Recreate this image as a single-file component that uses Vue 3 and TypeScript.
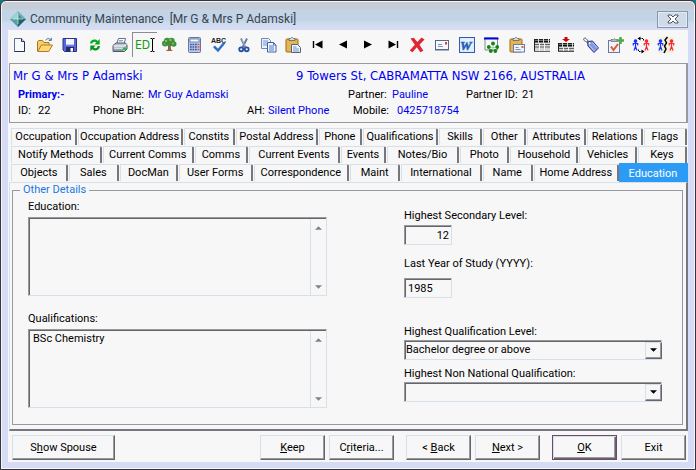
<script setup lang="ts">
import { ref } from 'vue'

interface Tool { name: string; art: string; active?: boolean }
interface Tab { label: string; span: number }
interface Action { before: string; key: string; after: string }

const person = (x: number, c: string) =>
  `<g transform="translate(${x} 0)" stroke="${c}" fill="none" stroke-width="1.200"><circle cx="2.500" cy="4" r="1.200" fill="${c}"/><path d="M2.500 5v5M.3 8.500v-2h4.400v2M2.500 9.500l-1.500 4M2.500 9.500l1.500 4"/></g>`
const board = `<rect x="1" y="2" width="12" height="13" rx="1" fill="#e8b44c" stroke="#9a6a1c"/><path d="M4 3.500h6V1.500H8.500L7.500 .5h-1l-1 1H4z" fill="#d8dce4" stroke="#59606e" stroke-width=".8"/>`
const sheet = (y: number) =>
  `<rect x="0" y="${y}" width="16" height="${15 - y}" fill="#d3d6d3"/><path d="M0 ${y + .5}h16" stroke="#222" stroke-dasharray="4 1"/><path d="M0 ${y + 2.5}h16" stroke="#111" stroke-width="2" stroke-dasharray="4 1"/><path d="M0 ${y + 5.500}h16M0 ${y + 8}h16M0 14.500h16" stroke="#444" stroke-width=".8"/><path d="M5.500 ${y + 4}v${10 - y}M10.500 ${y + 4}v${10 - y}" stroke="#f4f4f4"/><path d="M.5 ${y}v${14 - y}" stroke="#222"/>`

const tools: Tool[] = [
  { name: 'New', art: '<path d="M2.500 1.500h7l3 3v10h-10z" fill="#f6faff" stroke="#5c6f93"/><path d="M9.500 1.500v3h3" fill="#cbd9ee" stroke="#26344f"/><path d="M12.500 5v9.500h-10" fill="none" stroke="#26344f"/>' },
  { name: 'Open', art: '<path d="M.5 14V4.500l1-1h4l1.500 2h5v3" fill="#f2cf69" stroke="#ab7724"/><path d="M.7 14.500l3.800-6.500h11l-3.800 6.500z" fill="#ffd878" stroke="#b47b22"/><path d="M8.500 3.200c2-2.200 4-1.900 5.400-.2M14.300.8v2.600h-2.600" fill="none" stroke="#49678f"/>' },
  { name: 'Save', art: '<path d="M1 1.500h13.500v13H2.500L1 13z" fill="#5867d8" stroke="#27328f"/><rect x="4" y="2" width="8" height="6" fill="#f4f6ff"/><path d="M4 8h8" stroke="#8ca2e8"/><rect x="4" y="10" width="8" height="4.500" fill="#222a69"/><rect x="8.500" y="11" width="2.500" height="3.500" fill="#fff"/>' },
  { name: 'Refresh', art: '<path d="M3 6.500c.4-4 5.200-5.300 7.700-2.500l2-2v5.500H7.500L9.300 5.500C7.500 4 5.800 4.800 5.300 6.500z" fill="#08a820"/><path d="M13 9c-.4 4.500-5 5.800-7.700 3.200l-2 2V8.500h5.200l-1.800 2c1.800 1.500 3.400.6 4-1.500z" fill="#08951c"/>' },
  { name: 'Print', art: '<path d="M4.500 7l2-5.500h7L12 7z" fill="#fff" stroke="#61708b"/><path d="M1 8.500l3-2.500h9.500l1.500 2v4L12.500 14.500H1z" fill="#b9c1cc" stroke="#4b586c"/><path d="M1.500 9h10.500l2.500-1.500M2.500 12h8" stroke="#f8fbff" fill="none"/><path d="M2 13h9" stroke="#58677e"/><rect x="11" y="10.500" width="3" height="2.500" fill="#19c92e"/><path d="M7 3.500h4M6.500 5h4" stroke="#95a4bd"/>' },
  { name: 'Edit', active: true, art: '' },
  { name: 'Family tree', art: '<path d="M7 7h2.500l.5 5.500 2 1.500H4.500L7 12.500z" fill="#976239"/><path d="M8 8L5 6.500M9 9l3-2.500" stroke="#79502c"/><g fill="#438d3d"><circle cx="4" cy="6.500" r="3"/><circle cx="6" cy="3.800" r="3"/><circle cx="10.500" cy="4" r="3.200"/><circle cx="12.700" cy="7" r="2.800"/><circle cx="8.500" cy="7" r="2.500"/></g><g fill="#86c66b"><circle cx="5" cy="4" r="1.200"/><circle cx="9.500" cy="3" r="1.200"/><circle cx="12" cy="6.500" r="1"/><circle cx="3.500" cy="7" r=".8"/></g>' },
  { name: 'Calculator', art: '<rect x="2.500" y=".5" width="12" height="15" rx="1" fill="#b9cbe8" stroke="#6376a4"/><rect x="4" y="2" width="9" height="3" fill="#f4faff" stroke="#486190" stroke-width=".7"/><path d="M4 7.500h1.700M6.500 7.500h1.700M9 7.500h1.700M4 10h1.700M6.500 10h1.700M9 10h1.700M4 12.500h1.700M6.500 12.500h1.700M9 12.500h1.700" stroke="#364f9d" stroke-width="1.400"/><path d="M11.500 7.500h2M11.500 10h2M11.500 12.500h2" stroke="#d65c56" stroke-width="1.400"/>' },
  { name: 'Spelling', art: '<text x="0" y="5.500" font-size="7" font-weight="700" font-family="Liberation Sans, sans-serif" fill="#222">ABC</text><path d="M3 9.500l4 4 6.500-8" fill="none" stroke="#397ad5" stroke-width="2.500"/><path d="M3 9.500l4 4 6.500-8" fill="none" stroke="#2358a9" stroke-width=".8"/>' },
  { name: 'Cut', art: '<path d="M5 1.500l4.500 9M11 1.500l-4.500 9" stroke="#5e7898" stroke-width="1.800"/><path d="M5.700 2l3.800 8" stroke="#c9d7e7" stroke-width=".7"/><g fill="#d9e7ff" stroke="#244da5" stroke-width="1.700"><circle cx="5.200" cy="12.300" r="2"/><circle cx="10.700" cy="12.300" r="2"/></g>' },
  { name: 'Copy', art: '<path d="M.5 1.500h7l2 2v8h-9z" fill="#e9f2ff" stroke="#7188b5"/><path d="M2 4h5M2 6h5M2 8h5" stroke="#7495cc"/><path d="M6.500 5.500h6l2.500 2.500v7H6.500z" fill="#f2f7ff" stroke="#3f62a5"/><path d="M12.500 5.500V8H15M8 9h5M8 11h5M8 13h5" stroke="#5079be" fill="none"/>' },
  { name: 'Paste', art: board + '<path d="M6.500 7.500h6l3 3v5h-9z" fill="#eef5ff" stroke="#4e6387"/><path d="M8 10h3.500M8 12h6M8 14h6" stroke="#7893bc"/>' },
  { name: 'First', art: '<path d="M3.500 4v7" stroke="#000" stroke-width="1.400"/><path d="M12.500 3.500v8L5 7.500z"/>' },
  { name: 'Previous', art: '<path d="M12 3.500v8L4 7.500z"/>' },
  { name: 'Next record', art: '<path d="M4 3.500v8l8-4z"/>' },
  { name: 'Last', art: '<path d="M12.500 4v7" stroke="#000" stroke-width="1.400"/><path d="M3.500 3.500v8L11 7.500z"/>' },
  { name: 'Delete', art: '<path d="M1.500 1.500l3.300-.8 3.500 4.200L12.500.5l3 2-5 5.200 3.900 6-3 1.600-3.600-5-4.300 5-2.800-1.700 5.200-5.900z" fill="#df2631"/>' },
  { name: 'Email', art: '<rect x="1.500" y="3.500" width="13" height="9" fill="#f5f9ff" stroke="#536986"/><path d="M4 7.500h4M4 9.500h5" stroke="#8091ad"/><rect x="11" y="5" width="2" height="2.500" fill="#dc3b33"/><path d="M1 13.500h14" stroke="#a6b3c6"/>' },
  { name: 'Word', art: '<rect x=".5" y=".5" width="15" height="15" fill="#dce9ff" stroke="#2c5fb3"/><path d="M2 2h12v12H2z" fill="#e6effc"/><text x="1" y="12.500" font-family="Liberation Serif, serif" font-size="13" font-style="italic" font-weight="700" fill="#235db6" stroke="#235db6" stroke-width=".5">W</text>' },
  { name: 'Relationships', art: '<path d="M1 1h12.500v12H1z" fill="#f8f8f8" stroke="#888"/><path d="M0 1.500h14.500" stroke="#0000df" stroke-width="2"/><path d="M9 7v7M5 10.500h8" stroke="#9cb89c" stroke-width=".7"/><g fill="#118514"><circle cx="9" cy="6.500" r="1.900"/><circle cx="4.800" cy="10" r="1.900"/><circle cx="13.200" cy="10" r="1.900"/><circle cx="6.800" cy="14" r="1.900"/><circle cx="11.300" cy="14" r="1.900"/></g>' },
  { name: 'Mail note', art: board + '<rect x="4.500" y="7.500" width="11" height="7.500" fill="#eef5ff" stroke="#6b7da7"/><path d="M6.500 10.500h3M6.500 12.500h5" stroke="#8291b4"/><rect x="12.500" y="9" width="2" height="2" fill="#df5c3f"/>' },
  { name: 'List', art: sheet(2) },
  { name: 'Insert', art: sheet(6) + '<path d="M6.500 0h3v2h2.500L8 5 4 2h2.500z" fill="#d50000"/>' },
  { name: 'Tag', art: '<path d="M4.500 4.500l5-.5 6 7-4.500 4.500-6-6.500z" fill="#8397dc" stroke="#26358c"/><path d="M6 8l5.500 6M9.500 5.500l5 5.700" stroke="#c3cef8"/><circle cx="6.500" cy="6.300" r="1" fill="#fff"/><path d="M6 6L2.500 4.500C-.5 3 .5 0 3 1.500L6 5" fill="none" stroke="#555b73"/>' },
  { name: 'Add task', art: '<rect x=".5" y="3.500" width="11" height="12" fill="#eef3ff" stroke="#6c7799"/><path d="M3 4.500h6v-2H7.500l-1-1-1 1H3z" fill="#b3bbc8" stroke="#606b80" stroke-width=".7"/><path d="M3 9.500l2.500 3.500L10 7" fill="none" stroke="#e4572a" stroke-width="2"/><path d="M12.500 0v7M9 3.500h7" stroke="#53a948" stroke-width="2.500"/>' },
  { name: 'Swap partners', art: person(0, '#1730ff') + person(11, '#ff2630') + '<path d="M6 1.500h4.500V4M10 14.500H5.500V12" stroke="#000" fill="none" stroke-dasharray="1.500 1"/><path d="M7.500 -.5v4L4.500 1.500zM8.500 12.500v4l3-2z"/>' },
  { name: 'Separate partners', art: '<rect width="16" height="16" fill="#f1f0dc"/>' + person(0, '#1730ff') + person(11, '#ff2630') + '<path d="M9.500 0L7 3l1.500 3L6.500 9l1.500 3-2 4" fill="none" stroke="#000" stroke-width="1.500"/>' },
]

const tabRows: Tab[][] = [
  [
    { label: 'Occupation', span: 67 }, { label: 'Occupation Address', span: 109 }, { label: 'Constits', span: 52 },
    { label: 'Postal Address', span: 84 }, { label: 'Phone', span: 43 }, { label: 'Qualifications', span: 77 },
    { label: 'Skills', span: 43 }, { label: 'Other', span: 43 }, { label: 'Attributes', span: 60 },
    { label: 'Relations', span: 56 }, { label: 'Flags', span: 43 },
  ],
  [
    { label: 'Notify Methods', span: 93 }, { label: 'Current Comms', span: 94 }, { label: 'Comms', span: 53 },
    { label: 'Current Events', span: 94 }, { label: 'Events', span: 44 }, { label: 'Notes/Bio', span: 74 },
    { label: 'Photo', span: 49 }, { label: 'Household', span: 69 }, { label: 'Vehicles', span: 58 },
    { label: 'Keys', span: 49 },
  ],
  [
    { label: 'Objects', span: 57 }, { label: 'Sales', span: 50 }, { label: 'DocMan', span: 58 },
    { label: 'User Forms', span: 75 }, { label: 'Correspondence', span: 98 }, { label: 'Maint', span: 50 },
    { label: 'International', span: 82 }, { label: 'Name', span: 50 }, { label: 'Home Address', span: 87 },
    { label: 'Education', span: 70 },
  ],
]
const activeTab = ref('Education')

const education = ref('')
const qualifications = ref('BSc Chemistry')
const secondaryLevel = ref('12')
const lastYear = ref('1985')
const qualificationLevel = ref('Bachelor degree or above')
const nonNational = ref('')

const actions: Action[][] = [
  [{ before: '', key: 'K', after: 'eep' }, { before: 'C', key: 'r', after: 'iteria...' }],
  [{ before: '< ', key: 'B', after: 'ack' }, { before: '', key: 'N', after: 'ext >' }],
  [{ before: '', key: 'O', after: 'K' }, { before: 'Exit', key: '', after: '' }],
]
</script>

<template>
  <main class="window">
    <header class="titlebar">
      <svg class="logo" viewBox="0 0 16 16" aria-hidden="true">
        <path d="M8 0L0 8l8 8 8-8z" fill="#75aeb0" />
        <path d="M8 0v8H0z" fill="#9bd2ce" />
        <path d="M8 3l5 5H8z" fill="#3c9293" />
        <path d="M8 8h8l-8 8z" fill="#225f67" />
        <path d="M0 8h8v8z" fill="#559fa2" />
        <path d="M8 3v10M3 8h10" stroke="#d2eeea" stroke-width=".7" />
      </svg>
      <h1>Community Maintenance&nbsp; [Mr G &amp; Mrs P Adamski]</h1>
      <button class="close" type="button" aria-label="Close">
        <svg viewBox="0 0 12 10"><path d="M1 1h3l2 2 2-2h3v1L8 5l3 3v1H8L6 7 4 9H1V8l3-3-3-3z" fill="#fff" stroke="#4d5560" /></svg>
      </button>
    </header>

    <div class="body">
      <nav class="toolbar" aria-label="Tools">
        <button v-for="t in tools" :key="t.name" type="button" class="tool" :class="{ pressed: t.active }" :aria-label="t.name">
          <template v-if="t.active">
            <span class="ed">ED</span>
            <svg class="caret" viewBox="0 0 5 14"><path d="M.5 .5h1.500l.5 .5.5-.5h1.500M2.500 1v12M.5 13.500h1.500l.5-.5.5.5h1.500" fill="none" stroke="#000" /></svg>
          </template>
          <svg v-else class="glyph" viewBox="0 0 16 16" v-html="t.art"></svg>
        </button>
      </nav>

      <section class="summary">
        <div class="headline"><span>Mr G &amp; Mrs P Adamski</span><span>9 Towers St, CABRAMATTA NSW 2166, AUSTRALIA</span></div>
        <div class="line primary">
          <b>Primary:-</b><span>Name:</span><span class="value">Mr Guy Adamski</span>
          <span>Partner:</span><span class="value">Pauline</span><span>Partner ID:</span><span>21</span>
        </div>
        <div class="line contact">
          <span>ID:</span><span>22</span><span>Phone BH:</span><span>AH:</span><span class="value">Silent Phone</span>
          <span>Mobile:</span><span class="value">0425718754</span>
        </div>
      </section>

      <div class="tabs" role="tablist">
        <div v-for="(row, i) in tabRows" :key="i" class="tab-row">
          <button
            v-for="tab in row" :key="tab.label" type="button" role="tab" class="tab"
            :class="{ active: tab.label === activeTab }" :aria-selected="tab.label === activeTab"
            :style="{ flexGrow: tab.span }" @click="activeTab = tab.label"
          >{{ tab.label }}</button>
        </div>
      </div>

      <section class="panel" role="tabpanel">
        <fieldset>
          <legend>Other Details</legend>
          <div class="form">
            <div class="col">
              <div class="memo-field">
                <label for="education">Education:</label>
                <div class="memo">
                  <textarea id="education" v-model="education"></textarea>
                  <div class="scroll">
                    <button type="button" aria-label="Scroll education up"><svg viewBox="0 0 8 4"><path d="M0 4l4-4 4 4z" /></svg></button>
                    <button type="button" aria-label="Scroll education down"><svg viewBox="0 0 8 4"><path d="M0 0h8L4 4z" /></svg></button>
                  </div>
                </div>
              </div>
              <div class="memo-field">
                <label for="qualifications">Qualifications:</label>
                <div class="memo">
                  <textarea id="qualifications" v-model="qualifications"></textarea>
                  <div class="scroll">
                    <button type="button" aria-label="Scroll qualifications up"><svg viewBox="0 0 8 4"><path d="M0 4l4-4 4 4z" /></svg></button>
                    <button type="button" aria-label="Scroll qualifications down"><svg viewBox="0 0 8 4"><path d="M0 0h8L4 4z" /></svg></button>
                  </div>
                </div>
              </div>
            </div>

            <div class="col side">
              <div class="field level">
                <label for="secondary">Highest Secondary Level:</label>
                <input id="secondary" v-model="secondaryLevel" class="number" type="text" />
              </div>
              <div class="field year">
                <label for="year">Last Year of Study (YYYY):</label>
                <input id="year" v-model="lastYear" type="text" />
              </div>
              <div class="field">
                <label for="level">Highest Qualification Level:</label>
                <div class="combo">
                  <select id="level" v-model="qualificationLevel"><option>Bachelor degree or above</option></select>
                  <span class="drop"><svg viewBox="0 0 8 4"><path d="M0 0h8L4 4z" /></svg></span>
                </div>
              </div>
              <div class="field">
                <label for="national">Highest Non National Qualification:</label>
                <div class="combo">
                  <select id="national" v-model="nonNational"><option value=""></option></select>
                  <span class="drop"><svg viewBox="0 0 8 4"><path d="M0 0h8L4 4z" /></svg></span>
                </div>
              </div>
            </div>
          </div>
        </fieldset>
      </section>

      <footer>
        <button type="button" class="action wide">S<u>h</u>ow Spouse</button>
        <div class="groups">
          <div v-for="(group, i) in actions" :key="i" class="group">
            <button v-for="a in group" :key="a.before + a.key" type="button" class="action" :class="{ default: a.key === 'O' }">{{ a.before }}<u>{{ a.key }}</u>{{ a.after }}</button>
          </div>
        </div>
      </footer>
    </div>
  </main>
</template>

<style>
body { background: #087f82; }
</style>

<style scoped>
* { box-sizing: border-box; }
button, input, textarea, select { font: inherit; color: inherit; margin: 0; border-radius: 0; }
button { background: none; border: 0; padding: 0; white-space: nowrap; }

.window {
  min-height: 100vh;
  display: flex;
  flex-direction: column;
  padding: 0 6px 6px;
  border: 1px solid #38343a;
  border-radius: 6px 6px 0 0;
  box-shadow: inset 0 0 0 1px #f4f6fc;
  background: linear-gradient(#c6cdd7 0 8px, #c3d4e6 9px 20px, #cbdceb 21px, #d6dcf6 28px);
  font: 11px/14px Roboto, sans-serif;
  color: #000;
}
.titlebar { display: flex; align-items: center; height: 29px; padding: 7px 1px 0 3px; }
.logo { width: 16px; height: 16px; }
h1 { flex: 1; margin: 0 0 0 4px; font: 12px/16px Roboto, sans-serif; color: #3a4352; white-space: nowrap; }
.close { width: 31px; height: 17px; display: grid; place-items: center; border: 1px solid #8795b0; background: #cfdbe9; box-shadow: inset 0 0 0 1px #e2eaf3; }
.close svg { width: 12px; height: 10px; }

.body { flex: 1; display: flex; flex-direction: column; margin: 0 1px 1px; background: #f7f7f7; }
.toolbar { display: grid; grid-template-columns: repeat(27, 1fr); padding: 2px 10px 0 0; height: 33px; }
.tool { display: flex; align-items: center; justify-content: center; height: 25px; }
.glyph { width: 16px; height: 16px; overflow: visible; }
.tool.pressed { border-left: 1px solid #8b8b92; border-top: 1px solid #8b8b92; }
.ed { font: 12px/16px "DejaVu Sans Condensed", sans-serif; color: #129b12; }
.caret { width: 5px; height: 14px; }

.summary { margin: 0 0 0 1px; padding: 3px 0 3px 3px; border: 1px solid #9898a0; border-right-width: 2px; height: 60px; white-space: nowrap; }
.headline { display: grid; grid-template-columns: 283fr 390fr; font: 13px/18px "DejaVu Sans Condensed", "DejaVu Sans", sans-serif; color: #0000f0; }
.line { display: grid; line-height: 16px; padding-left: 5px; }
.primary { grid-template-columns: 94fr 36fr 200fr 44fr 74fr 56fr 164fr; padding-top: 2px; }
.contact { grid-template-columns: 20fr 55fr 154fr 21fr 85fr 44fr 289fr; }
.line > * { min-width: 0; }
b, .value { color: #0000f0; }

.tabs { display: flex; flex-direction: column; padding: 5px 0 0 3px; }
.tab-row { display: flex; height: 18px; }
.tab {
  flex: 1 1 0;
  min-width: 0;
  margin-right: 1px;
  border: 1px solid #d5e0ea;
  border-right: 2px solid #77777a;
  border-bottom: 0;
  border-top-right-radius: 2px;
  height: 17px;
  line-height: 16px;
}
.tab.active { margin: -1px 0 0 -1px; height: 20px; background: #2b9bf5; color: #fff; border-color: #2b9bf5; border-radius: 0; }

.panel { flex: 1; display: flex; margin-left: 1px; padding: 1px 3px 4px 2px; border: 1px solid #d5e0ea; border-right: 2px solid #77777d; border-bottom: 2px solid #77777d; }
fieldset { flex: 1; min-width: 0; margin: 0; padding: 0 0 0 15px; border: 1px solid #9898a0; }
legend { margin-left: -8px; padding: 0 3px; color: #1c78e0; line-height: 12px; }
.form { display: grid; grid-template-columns: 299fr 258fr; column-gap: 77px; padding: 4px 20px 15px 0; }
.col { display: flex; flex-direction: column; min-width: 0; }
label { white-space: nowrap; display: block; }
.memo-field + .memo-field { margin-top: 16px; }
.memo-field { display: flex; flex-direction: column; gap: 3px; }
.memo { display: flex; height: 79px; border: 1px solid; border-color: #9898a0 #d5e0ea #d5e0ea #9898a0; box-shadow: inset 1px 1px #666668; padding: 1px 0 0 1px; }
textarea { flex: 1; min-width: 0; resize: none; border: 0; outline: 0; background: none; padding: 1px 3px; overflow: hidden; display: block; }
.scroll { width: 16px; display: flex; flex-direction: column; justify-content: space-between; padding: 7px 0 6px; border-left: 1px solid #d5e0ea; }
.scroll button { display: flex; justify-content: center; }
.scroll svg { width: 7px; height: 4px; fill: #7c8290; }

.side { padding-top: 9px; }
.field { display: flex; flex-direction: column; gap: 1px; margin-bottom: 7px; }
.level { gap: 2px; margin-bottom: 12px; }
.year { gap: 7px; margin-bottom: 27px; }
input, select { height: 20px; border: 1px solid; border-color: #9898a0 #d5e0ea #d5e0ea #9898a0; box-shadow: inset 1px 1px #666668; background: #f7f7f7; outline: 0; }
input { width: 48px; padding: 1px 2px 0 3px; }
.number { text-align: right; }
.combo { display: grid; }
.combo > * { grid-area: 1 / 1; }
select { appearance: none; width: 100%; padding: 0 18px 0 1px; }
.drop { justify-self: end; align-self: center; width: 17px; height: 17px; display: grid; place-items: center; pointer-events: none; border: 1px solid; border-color: #d5e0ea #66666a #66666a #d5e0ea; box-shadow: inset -1px -1px #9898a0; }
.drop svg { width: 7px; height: 4px; }

footer { display: flex; justify-content: space-between; padding: 4px 2px 2px 4px; }
.groups { display: flex; gap: 12px; }
.group { display: flex; gap: 4px; }
.action { width: 65px; height: 25px; border: 1px solid; border-color: #d5e0ea #66666a #66666a #d5e0ea; box-shadow: inset -1px -1px #9898a0; }
.wide { width: 103px; }
.default { border-color: #6b4a6b; box-shadow: inset 1px 1px #d5e0ea, inset -1px -1px #66666a, inset -2px -2px #9898a0; }
</style>
